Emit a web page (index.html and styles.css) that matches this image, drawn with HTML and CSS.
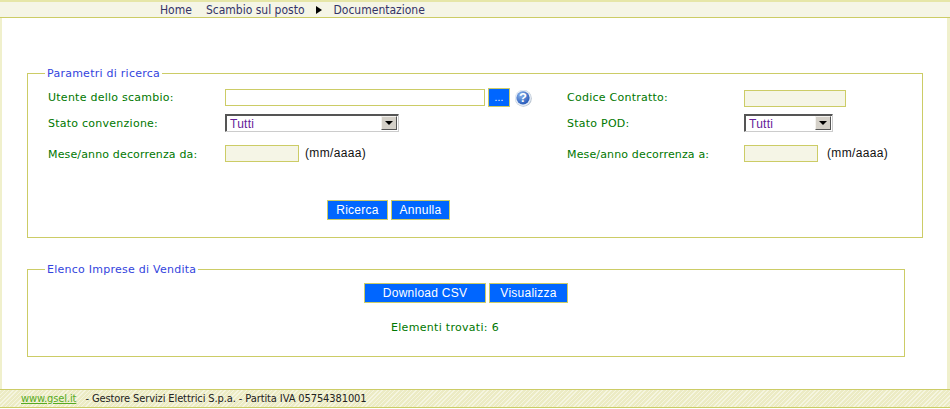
FILE: index.html
```html
<!DOCTYPE html>
<html lang="it">
<head>
    <meta charset="UTF-8">
    <title>Scambio sul posto</title>
    <link rel="stylesheet" href="styles.css">
</head>
<body>
    <div class="menu">
        <a href="#">Home</a>
        <a href="#">Scambio sul posto</a>
        <span class="menu-arrow"></span>
        <a href="#">Documentazione</a>
    </div>
    <div class="main">
        <fieldset class="box box-search">
            <legend>Parametri di ricerca</legend>
            <div class="row row-1">
                <label>Utente dello scambio:</label>
                <div class="field">
                    <input class="txt txt-user" type="text">
                    <button class="btn btn-dots" type="button">...</button>
                    <svg class="help" width="18" height="18" viewBox="0 0 18 18">
                        <defs>
                            <radialGradient id="helpfill" cx="35%" cy="30%" r="75%">
                                <stop offset="0" stop-color="#8ab2ea"/>
                                <stop offset="1" stop-color="#2458b8"/>
                            </radialGradient>
                        </defs>
                        <circle cx="9.4" cy="9.4" r="8.4" fill="#b9c3cf"/>
                        <circle cx="9" cy="9" r="8" fill="#e4ecf6"/>
                        <circle cx="9" cy="8.8" r="6.6" fill="url(#helpfill)"/>
                        <text x="9" y="13.4" text-anchor="middle" class="help-q">?</text>
                    </svg>
                </div>
                <label>Codice Contratto:</label>
                <div class="field"><input class="txt txt-off txt-code" type="text"></div>
            </div>
            <div class="row row-2">
                <label>Stato convenzione:</label>
                <div class="field">
                    <div class="select select-wide"><span>Tutti</span><i class="select-btn"></i></div>
                </div>
                <label>Stato POD:</label>
                <div class="field">
                    <div class="select select-short"><span>Tutti</span><i class="select-btn"></i></div>
                </div>
            </div>
            <div class="row row-3">
                <label>Mese/anno decorrenza da:</label>
                <div class="field">
                    <input class="txt txt-off txt-date" type="text">
                    <span class="hint">(mm/aaaa)</span>
                </div>
                <label>Mese/anno decorrenza a:</label>
                <div class="field">
                    <input class="txt txt-off txt-date" type="text">
                    <span class="hint hint-right">(mm/aaaa)</span>
                </div>
            </div>
            <div class="actions actions-search">
                <button class="btn btn-ricerca" type="button">Ricerca</button>
                <button class="btn btn-annulla" type="button">Annulla</button>
            </div>
        </fieldset>
        <fieldset class="box box-list">
            <legend>Elenco Imprese di Vendita</legend>
            <div class="actions actions-list">
                <button class="btn btn-csv" type="button">Download CSV</button>
                <button class="btn btn-show" type="button">Visualizza</button>
            </div>
            <p class="found">Elementi trovati: 6</p>
        </fieldset>
    </div>
    <div class="footer">
        <a href="#">www.gsel.it</a>
        <span>- Gestore Servizi Elettrici S.p.a. - Partita IVA 05754381001</span>
    </div>
</body>
</html>
```

FILE: styles.css
```css
*{
    margin: 0;
    padding: 0;
    box-sizing: border-box;
}
body{
    display: flex;
    flex-direction: column;
    height: 100vh;
    overflow: hidden;
    background-color: #fff;
    font-family: "DejaVu Sans", sans-serif;
    font-size: 11px;
    letter-spacing: .25px;
}
.menu{
    display: flex;
    align-items: center;
    height: 18px;
    padding-left: 160px;
    border-top: 2px solid #e6e6a8;
    border-bottom: 1px solid #cccc66;
    background-color: #f5f5e6;
    font-family: "DejaVu Sans Condensed", "DejaVu Sans", sans-serif;
    font-size: 12px;
    letter-spacing: 0;
}
.menu a{
    color: #333366;
    text-decoration: none;
    margin-right: 14px;
}
.menu-arrow{
    width: 0;
    height: 0;
    margin-left: -3px;
    margin-right: 12px;
    border-left: 6px solid #000;
    border-top: 4px solid transparent;
    border-bottom: 4px solid transparent;
}
.main{
    flex: 1;
    border-left: 2px solid #f0f0cc;
    border-right: 3px solid #f0f0cc;
    padding-top: 49px;
}
.box{
    border: 1px solid #cccc66;
    padding: 0 20px;
    margin-left: 25px;
}
.box legend{
    margin-left: -3px;
    padding: 0 2px;
    color: #3344dd;
}
.box-search{
    height: 171px;
    margin-right: 24px;
}
.box-list{
    height: 94px;
    margin-top: 25px;
    margin-right: 42px;
}
.row{
    display: grid;
    grid-template-columns: 177px 342px 177px 1fr;
    align-items: center;
    color: #007700;
}
.row-1{
    height: 20px;
    margin-top: 7px;
}
.row-2{
    height: 20px;
    margin-top: 6px;
}
.row-3{
    height: 20px;
    margin-top: 10px;
}
.row-3 label{
    padding-top: 2px;
    letter-spacing: .15px;
}
.field{
    display: flex;
    align-items: center;
}
.txt{
    height: 17px;
    border: 1px solid #cccc66;
    background-color: #fff;
}
.txt-off{
    background-color: #f5f5e6;
}
.txt-user{
    width: 260px;
}
.txt-code{
    width: 102px;
    margin-top: 2px;
}
.txt-date{
    width: 74px;
}
.hint{
    margin-left: 6px;
    color: #111;
    font-family: "Liberation Sans", sans-serif;
    font-size: 12px;
    letter-spacing: .35px;
}
.hint-right{
    margin-left: 9px;
}
.btn{
    height: 20px;
    border: 1px solid #cccc66;
    background-color: #0066ff;
    color: #fff;
    font-family: "Liberation Sans", sans-serif;
    font-size: 12px;
    letter-spacing: .25px;
}
.btn-dots{
    width: 22px;
    height: 19px;
    margin-left: 3px;
    font-size: 10px;
}
.help{
    margin-left: 4px;
    margin-top: 2px;
}
.help-q{
    fill: #fff;
    font-family: "Liberation Sans", sans-serif;
    font-size: 13px;
    font-weight: bold;
}
.select{
    display: flex;
    justify-content: space-between;
    height: 18px;
    border: 1px solid;
    border-color: #555 #ccc #ccc #555;
    box-shadow: inset 1px 1px 0 #555;
    color: #662299;
    font-family: "Liberation Sans", sans-serif;
    font-size: 12px;
    line-height: 16px;
    padding: 1px 1px 0 4px;
}
.select-wide{
    width: 174px;
}
.select-short{
    width: 89px;
}
.select-btn{
    display: flex;
    align-items: center;
    justify-content: center;
    width: 16px;
    height: 14px;
    background-color: #d4d0c8;
    border: 1px solid;
    border-color: #f4f2ee #555 #555 #f4f2ee;
}
.select-btn::before{
    content: "";
    border-top: 4px solid #000;
    border-left: 4px solid transparent;
    border-right: 4px solid transparent;
}
.actions{
    display: flex;
    gap: 3px;
}
.actions-search{
    margin-top: 37px;
    padding-left: 279px;
}
.actions-list{
    margin-top: 7px;
    padding-left: 316px;
}
.btn-ricerca{
    width: 61px;
}
.btn-annulla{
    width: 59px;
}
.btn-csv{
    width: 122px;
}
.btn-show{
    width: 79px;
}
.found{
    margin-top: 18px;
    padding-left: 343px;
    color: #007700;
    letter-spacing: .3px;
}
.footer{
    display: flex;
    align-items: center;
    height: 19px;
    margin-bottom: 1px;
    padding-left: 21px;
    border-top: 1px solid #cccc66;
    border-bottom: 1px solid #cccc66;
    background-color: #f0f0cc;
    background-image: repeating-linear-gradient(135deg, #f5f5e0 0, #f5f5e0 1px, #ecebc4 1px, #ecebc4 3px);
    color: #222;
    font-family: "DejaVu Sans Condensed", "DejaVu Sans", sans-serif;
    letter-spacing: -.1px;
}
.footer a{
    color: #55aa22;
    margin-right: 9px;
}
```
